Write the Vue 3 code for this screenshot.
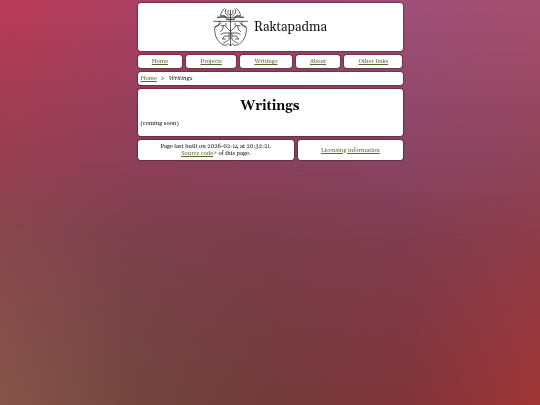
<template>
  <div class="page">
    <header class="panel banner">
      <svg class="logo" viewBox="0 0 104 114" aria-hidden="true">
        <path d="M52 5V114M0 40H104M12 28H92M38 34H66" />
        <g v-for="side in sides" :key="side" :transform="side">
          <path d="M34 2C27 7 23 15 22 23H34L40 28M39 2C33 12 38 19 46 24M45 6C43 16 46 20 52 21" />
          <path d="M12 28C22 28 26 24 35 25L43 34H52M17 40C20 45 18 50 12 53L5 57C3 75 8 94 23 106C29 111 36 113 43 111" />
          <path d="M5 57L17 52L24 43M52 70L41 60L36 53H22M31 53L28 65L21 71M38 45V53" />
          <path d="M52 75H31L22 80M48 75V94L39 101L30 105M48 84H34L27 93H38M52 114L43 105" />
        </g>
      </svg>
      <span class="site-name">Raktapadma</span>
    </header>

    <nav class="nav" aria-label="Main">
      <div v-for="item in navItems" :key="item.label" class="panel nav-item">
        <a :href="item.href">{{ item.label }}</a>
      </div>
    </nav>

    <nav class="panel breadcrumb" aria-label="Breadcrumb">
      <a href="#home">Home</a>
      <span>&gt;</span>
      <em>Writings</em>
    </nav>

    <main class="panel content">
      <h1>Writings</h1>
      <p>(coming soon)</p>
    </main>

    <footer class="footer">
      <div class="panel build">
        <div>Page last built on 2026-02-14 at 20:32:21.</div>
        <div>
          <a href="#source">Source code<svg class="external" viewBox="0 0 8 8" aria-hidden="true"><path d="M1 7L6 2M3 2H6V5" /></svg></a>
          of this page.
        </div>
      </div>
      <div class="panel license">
        <a href="#licensing">Licensing information</a>
      </div>
    </footer>
  </div>
</template>

<script setup>
const navItems = [
  { label: "Home", href: "#home" },
  { label: "Projects", href: "#projects" },
  { label: "Writings", href: "#writings" },
  { label: "About", href: "#about" },
  { label: "Other links", href: "#links" },
];

// the emblem is symmetric, so one half is drawn twice
const sides = ["translate(0 0)", "translate(104 0) scale(-1 1)"];
</script>

<style>
/* three horizontal colour bands, faded into each other */
body {
  background: linear-gradient(to right, #87414f, #803e54 25%, #803f55 50%, #80405a 75%, #863f52);
}
body::before,
body::after {
  content: "";
  position: fixed;
  inset: 0;
  z-index: -1;
}
body::before {
  background: linear-gradient(to right, #bb3a58, #ac4164 25%, #a0466c 50%, #9f5078 75%, #a64f6e);
  mask-image: linear-gradient(#000, rgba(0, 0, 0, 0.55) 25%, transparent 60%);
}
body::after {
  background: linear-gradient(to right, #87564b, #71463f 25%, #723c3b 50%, #80353a 75%, #a03535);
  mask-image: linear-gradient(transparent 40%, rgba(0, 0, 0, 0.6) 75%, #000);
}
</style>

<style scoped>
.page {
  box-sizing: border-box;
  max-width: 271px;
  margin: 0 auto;
  padding: 3px;
  display: flex;
  flex-direction: column;
  gap: 4px;
  font-family: Gelasio, Georgia, "Liberation Serif", serif;
  font-size: 6px;
  line-height: 7px;
  color: #111;
}

.panel {
  background: #fff;
  border-radius: 3px;
  box-shadow: 0 0 2px #000;
}

a {
  color: #556b2f;
}

.banner {
  display: flex;
  align-items: center;
  justify-content: center;
  gap: 6px;
  padding: 5px 3px;
}
.logo {
  width: 35px;
  height: 38px;
  fill: none;
  stroke: #111;
  stroke-width: 2;
}
.site-name {
  font-size: 13px;
  line-height: 18px;
}

.nav {
  display: flex;
  gap: 4px;
}
.nav-item {
  flex: 1 1 auto;
  padding: 3px;
  text-align: center;
}

.breadcrumb {
  display: flex;
  gap: 4px;
  padding: 3px;
}

.content {
  padding: 8px 3px 9px;
}
h1 {
  margin: 0 0 5px;
  font-size: 13px;
  line-height: 18px;
  text-align: center;
  color: #000;
}
p {
  margin: 0;
}

.footer {
  display: flex;
  gap: 4px;
}
.footer .panel {
  flex: 1 1 auto;
  padding: 3px;
  text-align: center;
}
.footer .license {
  display: flex;
  align-items: center;
  justify-content: center;
}
.external {
  width: 4px;
  height: 4px;
  fill: none;
  stroke: currentColor;
}
</style>
